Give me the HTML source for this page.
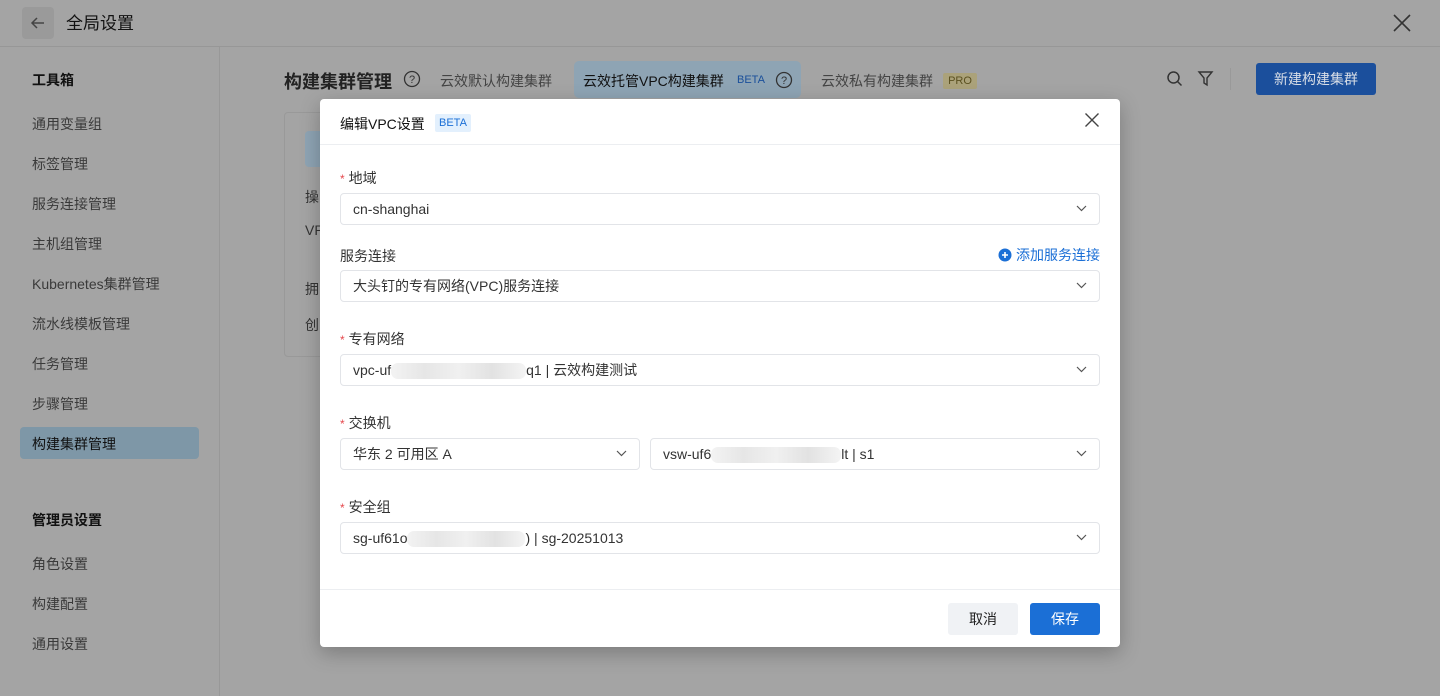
<!DOCTYPE html>
<html><head><meta charset="utf-8"><style>
*{box-sizing:border-box;margin:0;padding:0}
body{width:1440px;height:696px;overflow:hidden;background:#a4a4a4;font-family:"Liberation Sans","Noto Sans CJK SC",sans-serif;color:#1f1f1f;position:relative}
.abs{position:absolute}
.hdr{left:0;top:0;width:1440px;height:47px;border-bottom:1px solid #979797}
.back{left:22px;top:7px;width:32px;height:32px;border-radius:4px;background:#9a9a9a}
.side{left:0;top:47px;width:220px;height:649px;border-right:1px solid #989898}
.si{position:absolute;left:32px;font-size:14px;color:#3a3a3a}
.sh{position:absolute;left:32px;font-size:14px;color:#111;font-weight:bold}
.modal{left:320px;top:99px;width:800px;height:548px;background:#fff;border-radius:4px;box-shadow:0 6px 20px rgba(0,0,0,.25)}
.lbl{position:absolute;left:20px;font-size:14px;color:#333}
.lbl b{color:#e5484d;font-weight:normal;font-size:12px;margin-right:4px}
.sel{position:absolute;height:32px;border:1px solid #e2e4e8;border-radius:4px;font-size:14px;color:#333;padding:0 12px;line-height:30px}
.sel svg{position:absolute;right:12px;top:11px}
.blur{display:inline-block;vertical-align:middle;height:16px;background:linear-gradient(90deg,#f3f3f3,#e6e6e6,#f0f0f0,#e2e2e2,#f4f4f4);border-radius:7px}
</style></head><body>
<div class="abs hdr"></div>
<div class="abs back"><svg width="32" height="32"><path d="M22 16H10M15 11l-5 5 5 5" stroke="#444" stroke-width="1.5" fill="none"/></svg></div>
<div class="abs" style="left:66px;top:9px;font-size:17px;color:#111">全局设置</div>
<svg class="abs" style="left:1392px;top:13px" width="20" height="20"><path d="M2 2l16 16M18 2L2 18" stroke="#333" stroke-width="1.6"/></svg>
<div class="abs side">
<div class="sh" style="top:23px">工具箱</div>
<div class="si" style="top:67px">通用变量组</div>
<div class="si" style="top:107px">标签管理</div>
<div class="si" style="top:147px">服务连接管理</div>
<div class="si" style="top:187px">主机组管理</div>
<div class="si" style="top:227px">Kubernetes集群管理</div>
<div class="si" style="top:267px">流水线模板管理</div>
<div class="si" style="top:307px">任务管理</div>
<div class="si" style="top:347px">步骤管理</div>
<div style="position:absolute;left:20px;top:380px;width:179px;height:32px;background:#7e97a7;border-radius:4px"></div>
<div class="sh" style="top:387px;font-weight:normal;color:#111">构建集群管理</div>
<div class="sh" style="top:463px">管理员设置</div>
<div class="si" style="top:507px">角色设置</div>
<div class="si" style="top:547px">构建配置</div>
<div class="si" style="top:587px">通用设置</div>
</div>
<div class="abs" style="left:284px;top:68px;font-size:18px;font-weight:bold;color:#222">构建集群管理</div>
<svg class="abs" style="left:403px;top:70px" width="18" height="18"><circle cx="9" cy="9" r="7.5" stroke="#333" stroke-width="1.3" fill="none"/><text x="9" y="13" font-size="11" text-anchor="middle" fill="#333" font-family="Liberation Sans">?</text></svg>
<div class="abs" style="left:440px;top:71px;font-size:14px;color:#444">云效默认构建集群</div>
<div class="abs" style="left:574px;top:61px;width:227px;height:37px;background:#8ea4b4;border-radius:5px"></div>
<div class="abs" style="left:583px;top:71px;font-size:14px;color:#111">云效托管VPC构建集群</div>
<div class="abs" style="left:737px;top:74px;font-size:11px;color:#1a4f9a">BETA</div>
<svg class="abs" style="left:775px;top:71px" width="18" height="18"><circle cx="9" cy="9" r="7.5" stroke="#333" stroke-width="1.3" fill="none"/><text x="9" y="13" font-size="11" text-anchor="middle" fill="#333" font-family="Liberation Sans">?</text></svg>
<div class="abs" style="left:821px;top:71px;font-size:14px;color:#444">云效私有构建集群</div>
<div class="abs" style="left:943px;top:73px;width:34px;height:16px;background:#aba27a;font-size:11px;color:#5a5020;text-align:center;line-height:16px;border-radius:2px">PRO</div>
<svg class="abs" style="left:1166px;top:70px" width="18" height="18"><circle cx="7.5" cy="7.5" r="5.5" stroke="#333" stroke-width="1.5" fill="none"/><path d="M11.5 11.5l4 4" stroke="#333" stroke-width="1.5"/></svg>
<svg class="abs" style="left:1197px;top:70px" width="18" height="18"><path d="M2 2h13l-5 6v7l-3-2V8z" stroke="#333" stroke-width="1.4" fill="none"/></svg>
<div class="abs" style="left:1230px;top:68px;width:1px;height:22px;background:#999"></div>
<div class="abs" style="left:1256px;top:63px;width:120px;height:32px;background:#1b4f9c;border-radius:3px;color:#d7dde6;font-size:14px;text-align:center;line-height:32px">新建构建集群</div>
<div class="abs" style="left:284px;top:112px;width:60px;height:245px;border:1px solid #999;border-radius:4px"></div>
<div class="abs" style="left:305px;top:131px;width:30px;height:36px;background:#8ea4b4;border-radius:4px"></div>
<div class="abs" style="left:305px;top:187px;font-size:14px;color:#333">操</div>
<div class="abs" style="left:305px;top:222px;font-size:14px;color:#333">VP</div>
<div class="abs" style="left:305px;top:279px;font-size:14px;color:#333">拥</div>
<div class="abs" style="left:305px;top:315px;font-size:14px;color:#333">创</div>

<div class="abs modal">
<div style="position:absolute;left:20px;top:15px;font-size:14px;color:#111">编辑VPC设置</div>
<div style="position:absolute;left:115px;top:15px;height:18px;padding:0 4px;background:#e3f0fd;color:#1b6fd6;font-size:11px;line-height:18px;border-radius:2px">BETA</div>
<svg style="position:absolute;left:764px;top:13px" width="16" height="16"><path d="M1.5 1.5l13 13M14.5 1.5l-13 13" stroke="#444" stroke-width="1.4"/></svg>
<div style="position:absolute;left:0;top:45px;width:800px;height:1px;background:#eceef1"></div>
<div class="lbl" style="top:69px"><b>*</b>地域</div>
<div class="sel" style="left:20px;top:94px;width:760px">cn-shanghai<svg width="11" height="7"><path d="M1 1l4.5 4.5L10 1" stroke="#555" stroke-width="1.2" fill="none"/></svg></div>
<div class="lbl" style="top:147px">服务连接</div>
<div style="position:absolute;right:20px;top:146px;font-size:14px;color:#1b6fd6"><svg width="14" height="14" style="vertical-align:-2px;margin-right:4px"><circle cx="7" cy="7" r="6.5" fill="#1b6fd6"/><path d="M7 4v6M4 7h6" stroke="#fff" stroke-width="1.6"/></svg>添加服务连接</div>
<div class="sel" style="left:20px;top:171px;width:760px">大头钉的专有网络(VPC)服务连接<svg width="11" height="7"><path d="M1 1l4.5 4.5L10 1" stroke="#555" stroke-width="1.2" fill="none"/></svg></div>
<div class="lbl" style="top:230px"><b>*</b>专有网络</div>
<div class="sel" style="left:20px;top:255px;width:760px">vpc-uf<span class="blur" style="width:135px"></span>q1 | 云效构建测试<svg width="11" height="7"><path d="M1 1l4.5 4.5L10 1" stroke="#555" stroke-width="1.2" fill="none"/></svg></div>
<div class="lbl" style="top:314px"><b>*</b>交换机</div>
<div class="sel" style="left:20px;top:339px;width:300px">华东 2 可用区 A<svg width="11" height="7"><path d="M1 1l4.5 4.5L10 1" stroke="#555" stroke-width="1.2" fill="none"/></svg></div>
<div class="sel" style="left:330px;top:339px;width:450px">vsw-uf6<span class="blur" style="width:130px"></span>lt | s1<svg width="11" height="7"><path d="M1 1l4.5 4.5L10 1" stroke="#555" stroke-width="1.2" fill="none"/></svg></div>
<div class="lbl" style="top:398px"><b>*</b>安全组</div>
<div class="sel" style="left:20px;top:423px;width:760px">sg-uf61o<span class="blur" style="width:118px"></span>) | sg-20251013<svg width="11" height="7"><path d="M1 1l4.5 4.5L10 1" stroke="#555" stroke-width="1.2" fill="none"/></svg></div>
<div style="position:absolute;left:0;top:490px;width:800px;height:1px;background:#eceef1"></div>
<div style="position:absolute;left:628px;top:504px;width:70px;height:32px;background:#f0f2f5;border-radius:3px;font-size:14px;color:#222;text-align:center;line-height:32px">取消</div>
<div style="position:absolute;left:710px;top:504px;width:70px;height:32px;background:#1b6fd6;border-radius:3px;font-size:14px;color:#fff;text-align:center;line-height:32px">保存</div>
</div>
</body></html>
